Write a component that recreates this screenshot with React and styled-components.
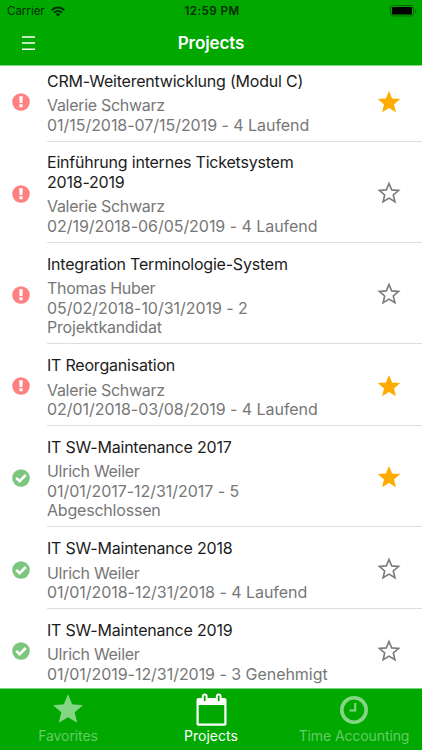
import styled, { createGlobalStyle } from "styled-components";

const projects = [
  {
    title: ["CRM-Weiterentwicklung (Modul C)"],
    owner: "Valerie Schwarz",
    period: ["01/15/2018-07/15/2019 - 4 Laufend"],
    late: true,
    favorite: true,
  },
  {
    title: ["Einführung internes Ticketsystem", "2018-2019"],
    owner: "Valerie Schwarz",
    period: ["02/19/2018-06/05/2019 - 4 Laufend"],
    late: true,
  },
  {
    title: ["Integration Terminologie-System"],
    owner: "Thomas Huber",
    period: ["05/02/2018-10/31/2019 - 2", "Projektkandidat"],
    late: true,
  },
  {
    title: ["IT Reorganisation"],
    owner: "Valerie Schwarz",
    period: ["02/01/2018-03/08/2019 - 4 Laufend"],
    late: true,
    favorite: true,
  },
  {
    title: ["IT SW-Maintenance 2017"],
    owner: "Ulrich Weiler",
    period: ["01/01/2017-12/31/2017 - 5", "Abgeschlossen"],
    favorite: true,
  },
  {
    title: ["IT SW-Maintenance 2018"],
    owner: "Ulrich Weiler",
    period: ["01/01/2018-12/31/2018 - 4 Laufend"],
  },
  {
    title: ["IT SW-Maintenance 2019"],
    owner: "Ulrich Weiler",
    period: ["01/01/2019-12/31/2019 - 3 Genehmigt"],
  },
];

const STAR =
  "M12 1l3.1 7.5 8.1.6-6.2 5.3 1.9 7.9-6.9-4.2-6.9 4.2L7 14.4.8 9.1l8.1-.6z";

const WifiIcon = () => (
  <svg width="14" height="11" viewBox="0 0 14 11" fill="none" stroke="#032c03" strokeWidth="2">
    <path d="M.7 4.1a9 9 0 0 1 12.6 0" />
    <path d="M3 6.6a5.7 5.7 0 0 1 8 0" />
    <path d="M7 10.6L4.9 8.4a3 3 0 0 1 4.2 0z" fill="#032c03" stroke="none" />
  </svg>
);

const StatusIcon = ({ late }) => (
  <svg width="18" height="18" viewBox="0 0 18 18" fill="none">
    <circle cx="9" cy="9" r="8.8" fill={late ? "#ff8080" : "#7cc67f"} />
    {late ? (
      <path d="M7.2 3.2h3.6l-.4 6.9H7.6zM7.4 11.3h3.2v3H7.4z" fill="white" />
    ) : (
      <path d="M4.2 8.8l3.4 3.4 6.2-6.2" stroke="white" strokeWidth="2.6" />
    )}
  </svg>
);

const StarIcon = ({ filled }) => (
  <svg width="24" height="24" viewBox="0 0 24 24" fill="none">
    {filled ? (
      <path d={STAR} fill="#ffab00" />
    ) : (
      <path
        d={STAR}
        transform="translate(12 12.6) scale(.86) translate(-12 -12.8)"
        stroke="#7c7c7c"
        strokeWidth="1.9"
      />
    )}
  </svg>
);

const CalendarIcon = () => (
  <svg width="31" height="33" viewBox="0 0 31 33" fill="none">
    <path
      fillRule="evenodd"
      d="M2.5 5h26a2 2 0 0 1 2 2v24a1.8 1.8 0 0 1-1.8 1.8H2.3A1.8 1.8 0 0 1 .5 31V7a2 2 0 0 1 2-2zM2.7 12v18.6h25.6V12z"
      fill="white"
    />
    <rect x="6.8" y="1.6" width="3.8" height="7.6" rx="1.9" fill="#00a800" stroke="white" strokeWidth="2" />
    <rect x="20.8" y="1.6" width="3.8" height="7.6" rx="1.9" fill="#00a800" stroke="white" strokeWidth="2" />
  </svg>
);

const ClockIcon = () => (
  <svg width="28" height="34" viewBox="0 -3 28 34" fill="none" stroke="currentColor">
    <circle cx="14" cy="14" r="12.2" strokeWidth="3.6" />
    <path d="M15.2 7v7.6H9.5" strokeWidth="2" />
  </svg>
);

const App = () => {
  return (
    <Screen>
      <GlobalStyle />
      <StatusBar>
        <Carrier>
          <span>Carrier</span>
          <WifiIcon />
        </Carrier>
        <Clock>12:59 PM</Clock>
        <Battery>
          <svg width="27" height="12" viewBox="0 0 27 12" fill="none">
            <rect x=".5" y=".5" width="23" height="10.5" rx="2.5" stroke="#046504" />
            <rect x="2" y="2" width="20" height="7.5" rx="1" fill="black" />
            <path d="M25 4v4q1.3-.6 1.3-2T25 4z" fill="#046504" />
          </svg>
        </Battery>
      </StatusBar>
      <NavBar>
        <MenuButton aria-label="Menu">
          <svg width="13" height="14" viewBox="0 0 13 14" stroke="white" strokeWidth="1.5">
            <path d="M0 1h13M0 7.1h13M0 13.2h13" />
          </svg>
        </MenuButton>
        <NavTitle>Projects</NavTitle>
        <span />
      </NavBar>
      <List>
        {projects.map((project) => (
          <Row key={project.title[0]}>
            <StatusIcon late={project.late} />
            <RowBody>
              <Info>
                <Title>
                  {project.title.map((line) => (
                    <Line key={line} $tracking={-0.21}>
                      {line}
                    </Line>
                  ))}
                </Title>
                <Line $tracking={-0.3}>{project.owner}</Line>
                {project.period.map((line, i) => (
                  <Line key={line} $tracking={i > 0 ? -0.2 : -0.04}>
                    {line}
                  </Line>
                ))}
              </Info>
              <FavoriteButton aria-label="Favorite">
                <StarIcon filled={project.favorite} />
              </FavoriteButton>
            </RowBody>
          </Row>
        ))}
      </List>
      <TabBar>
        <Tab>
          <svg width="32" height="32" viewBox="0 0 24 24">
            <path d={STAR} fill="currentColor" />
          </svg>
          <TabLabel>Favorites</TabLabel>
        </Tab>
        <Tab $active>
          <CalendarIcon />
          <TabLabel $active>Projects</TabLabel>
        </Tab>
        <Tab>
          <ClockIcon />
          <TabLabel>Time Accounting</TabLabel>
        </Tab>
      </TabBar>
    </Screen>
  );
};

const GlobalStyle = createGlobalStyle`
  body {
    margin: 0;
    font-family: Inter, "Liberation Sans", sans-serif;
  }
  * {
    box-sizing: border-box;
  }
`;

const Screen = styled.div`
  display: flex;
  flex-direction: column;
  width: 422px;
  height: 750px;
  overflow: hidden;
  background: #fff;
`;

const StatusBar = styled.div`
  display: grid;
  grid-template-columns: 1fr auto 1fr;
  align-items: center;
  height: 22px;
  padding: 0 5px 0 7px;
  background: #00a800;
  color: #032c03;
  font-size: 11.5px;
`;

const Carrier = styled.div`
  display: flex;
  align-items: center;
  gap: 6px;
`;

const Clock = styled.div`
  font-weight: 600;
  letter-spacing: 0.5px;
`;

const Battery = styled.div`
  display: flex;
  justify-content: flex-end;
`;

const NavBar = styled.div`
  display: grid;
  grid-template-columns: 1fr auto 1fr;
  align-items: center;
  height: 44px;
  padding: 0 22px 2px;
  background: #00a800;
  border-bottom: 1px solid #7fd47f;
`;

const MenuButton = styled.button`
  display: flex;
  padding: 0;
  border: 0;
  background: none;
`;

const NavTitle = styled.div`
  color: #fff;
  font-size: 17px;
  font-weight: 600;
  letter-spacing: -0.1px;
`;

const List = styled.div`
  flex: 1;
  overflow: hidden;
  & > :first-child {
    margin-top: -6.2px;
  }
`;

const Row = styled.div`
  display: flex;
  align-items: center;
  padding-left: 12px;
  & > svg {
    margin-top: 3px;
  }
`;

const RowBody = styled.div`
  flex: 1;
  display: flex;
  align-items: center;
  justify-content: space-between;
  margin-left: 17px;
  padding: 11.7px 21px 5.8px 0;
  border-bottom: 1px solid #dedede;
`;

const Info = styled.div`
  color: #777;
  font-size: 16px;
`;

const Title = styled.div`
  margin-bottom: 5.5px;
  color: #1c1c1c;
`;

const Line = styled.div`
  line-height: 19.3px;
  letter-spacing: ${({ $tracking }) => $tracking}px;
  white-space: nowrap;
`;

const FavoriteButton = styled.button`
  display: flex;
  margin-bottom: 3px;
  padding: 0;
  border: 0;
  background: none;
`;

const TabBar = styled.div`
  display: grid;
  grid-template-columns: 136px 150px 136px;
  height: 62px;
  background: #00a800;
  border-top: 1px solid #7fd47f;
`;

const Tab = styled.div`
  display: flex;
  flex-direction: column;
  align-items: center;
  justify-content: space-between;
  padding: 4px 0 7px;
  color: ${({ $active }) => ($active ? "#fff" : "#84d684")};
`;

const TabLabel = styled.div`
  color: ${({ $active }) => ($active ? "#fff" : "#66cc66")};
  font-size: 14px;
  line-height: 18px;
  letter-spacing: ${({ $active }) => ($active ? 0 : -0.1)}px;
  white-space: nowrap;
`;

export default App;
